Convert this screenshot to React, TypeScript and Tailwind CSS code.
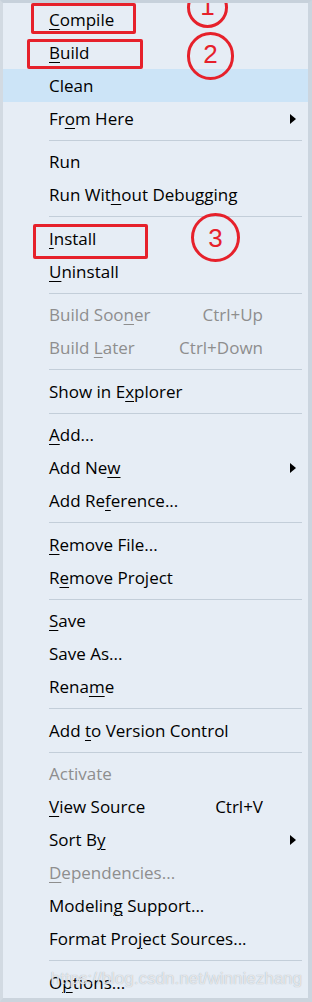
import React from "react";

type Item =
  | { sep: true }
  | {
      sep?: false;
      label: string;
      shortcut?: string;
      arrow?: boolean;
      disabled?: boolean;
      active?: boolean;
    };

// "&" marks the mnemonic letter
const items: Item[] = [
  { label: "&Compile" },
  { label: "&Build" },
  { label: "Clean", active: true },
  { label: "Fr&om Here", arrow: true },
  { sep: true },
  { label: "Run" },
  { label: "Run Wit&hout Debugging" },
  { sep: true },
  { label: "&Install" },
  { label: "&Uninstall" },
  { sep: true },
  { label: "Build Soo&ner", shortcut: "Ctrl+Up", disabled: true },
  { label: "Build &Later", shortcut: "Ctrl+Down", disabled: true },
  { sep: true },
  { label: "Show in E&xplorer" },
  { sep: true },
  { label: "&Add..." },
  { label: "Add Ne&w", arrow: true },
  { label: "Add Re&ference..." },
  { sep: true },
  { label: "&Remove File..." },
  { label: "R&emove Project" },
  { sep: true },
  { label: "&Save" },
  { label: "Save As..." },
  { label: "Rena&me" },
  { sep: true },
  { label: "Add &to Version Control" },
  { sep: true },
  { label: "Activate", disabled: true },
  { label: "&View Source", shortcut: "Ctrl+V" },
  { label: "Sort B&y", arrow: true },
  { label: "&Dependencies...", disabled: true },
  { label: "Modelin&g Support..." },
  { label: "Format Pro&ject Sources..." },
  { sep: true },
  { label: "O&ptions..." },
];

function Label({ text }: { text: string }) {
  const i = text.indexOf("&");
  if (i < 0) return <>{text}</>;
  return (
    <>
      {text.slice(0, i)}
      <u className="underline decoration-1 underline-offset-[3px]">{text[i + 1]}</u>
      {text.slice(i + 2)}
    </>
  );
}

function Marker({ className, n }: { className: string; n: string }) {
  return (
    <div
      className={`absolute rounded-full border-[3px] border-[#e6212b] flex items-center justify-center text-[#e6212b] text-[26px] leading-none font-['Liberation_Sans',sans-serif] ${className}`}
    >
      {n}
    </div>
  );
}

export default function App() {
  return (
    <div className="relative w-[312px] h-[1002px] overflow-hidden bg-[#e6edf5] border-t-[3px] border-t-[#c7d1db] border-l-[3px] border-l-[#d2dae2] border-r-[4px] border-r-[#cbd5df] border-b-[4px] border-b-[#cbd4dd] font-['Open_Sans',sans-serif] text-[17px] text-black">
      <div className="flex flex-col">
        {items.map((it, i) =>
          it.sep ? (
            <div key={i} className="h-[10.5px] flex items-center pl-[46px] pr-[6px]">
              <div className="h-px w-full bg-[#c3ced9]" />
            </div>
          ) : (
            <div
              key={i}
              className={`h-[33px] flex items-center pl-[46px] ${it.active ? "bg-[#cce4f7]" : ""} ${it.disabled ? "text-[#8e8e8e]" : ""}`}
            >
              <span className="flex-1 whitespace-nowrap">
                <Label text={it.label} />
              </span>
              {it.shortcut && <span className="whitespace-nowrap">{it.shortcut}</span>}
              <span className="w-[45px] h-full flex items-center pl-[27px]">
                {it.arrow && (
                  <svg width="6" height="10" viewBox="0 0 6 10">
                    <polygon points="0,0 6,5 0,10" fill="#000" />
                  </svg>
                )}
              </span>
            </div>
          )
        )}
      </div>

      {/* red annotations drawn over the menu */}
      <div className="absolute left-[28px] top-0 w-[105px] h-[31px] border-[3px] border-[#e6212b] rounded-[2px]" />
      <div className="absolute left-[24px] top-[36px] w-[116px] h-[30px] border-[3px] border-[#e6212b] rounded-[2px]" />
      <div className="absolute left-[30px] top-[221px] w-[115px] h-[35px] border-[3px] border-[#e6212b] rounded-[2px]" />
      <Marker className="left-[184px] top-[-16px] w-[41px] h-[41px] pb-[4px]" n="1" />
      <Marker className="left-[184px] top-[29px] w-[47px] h-[48px] pb-[4px]" n="2" />
      <Marker className="left-[188px] top-[210px] w-[49px] h-[49px]" n="3" />

      <div className="absolute right-[6px] top-[967px] text-[17px] leading-none font-['Liberation_Sans',sans-serif] text-white/70 [text-shadow:0_0_1px_#9aa4ae]">
        https://blog.csdn.net/winniezhang
      </div>
    </div>
  );
}
